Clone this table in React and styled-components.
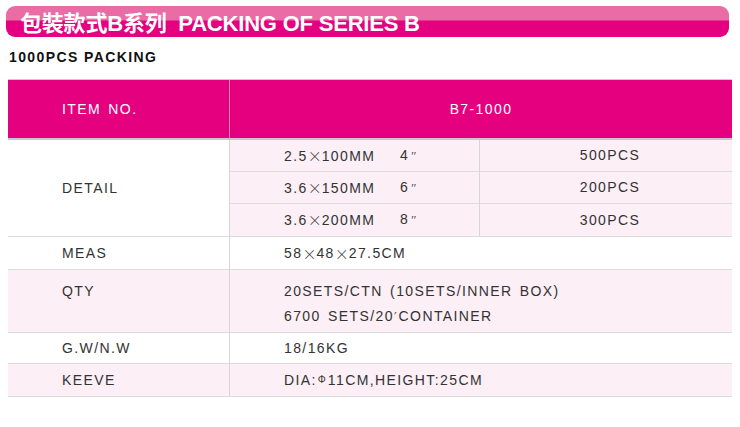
import React from "react";
import styled, { createGlobalStyle } from "styled-components";

const GlobalStyle = createGlobalStyle`
  body {
    margin: 0;
    background: #ffffff;
    font-family: "Liberation Sans", "Noto Sans CJK SC", sans-serif;
  }
`;

const Page = styled.div`
  width: 740px;
  height: 427px;
  padding-top: 6px;
  box-sizing: border-box;
`;

const TitleBar = styled.div`
  margin: 0 11px 0 6px;
  height: 31px;
  box-sizing: border-box;
  border-radius: 9px;
  background: linear-gradient(to bottom, #ea6ca4 0, #ea6ca4 14px, #e4007f 15px, #e4007f 100%);
  display: flex;
  align-items: center;
  padding: 0 0 2px 14px;
  color: #ffffff;
  font-family: "Liberation Sans", "Noto Sans CJK SC", sans-serif;
  font-weight: 700;
  font-size: 22px;
  letter-spacing: -0.2px;
  white-space: pre;
`;

const SubTitle = styled.div`
  margin: 12px 0 0 9px;
  font-family: "Liberation Sans", sans-serif;
  font-weight: 700;
  font-size: 14px;
  letter-spacing: 1.4px;
  color: #111111;
  height: 18px;
`;

const Table = styled.div`
  margin: 12px 8px 0 8px;
  display: grid;
  grid-template-columns: 221px 250px 253px;
  border-top: 1px solid #f3b6d2;
  font-size: 14px;
  letter-spacing: 1.4px;
  word-spacing: 2px;
  color: #333333;
`;

const HeadCell = styled.div`
  height: 58px;
  background: #e4007f;
  color: #ffffff;
  display: flex;
  align-items: center;
  padding-left: ${(p) => (p.$center ? "0" : "54px")};
  justify-content: ${(p) => (p.$center ? "center" : "flex-start")};
  grid-column: ${(p) => p.$span || "auto"};
  border-left: ${(p) => (p.$divider ? "1px solid #f08cbd" : "none")};
  border-bottom: 2px solid #c8c8c8;
`;

const Cell = styled.div`
  height: ${(p) => p.$h}px;
  box-sizing: border-box;
  background: ${(p) => (p.$pink ? "#fdeff6" : "#ffffff")};
  border-bottom: 1px solid #dcdcdc;
  border-left: ${(p) => (p.$divider ? "1px solid #d6d6d6" : "none")};
  grid-column: ${(p) => p.$span || "auto"};
  grid-row: ${(p) => p.$rows || "auto"};
  display: flex;
  flex-direction: column;
  justify-content: ${(p) => (p.$top ? "flex-start" : "center")};
  align-items: ${(p) => (p.$center ? "center" : "flex-start")};
  padding-left: ${(p) => (p.$center ? "8px" : "54px")};
  padding-top: ${(p) => (p.$top ? "9px" : "0")};
  line-height: 25px;
`;

const SizeText = styled.span`
  display: inline-block;
  width: 116px;
`;

const Line = styled.div`
  display: flex;
`;

const Mul = styled.span`
  font-family: "Noto Sans CJK SC", sans-serif;
  font-weight: 300;
  letter-spacing: 0;
`;

const Prime = styled.span`
  font-family: "Liberation Serif", serif;
  font-style: italic;
  font-size: 13px;
  color: #555555;
  margin-left: 1px;
`;

const FootMark = styled.span`
  font-family: "DejaVu Sans", sans-serif;
  font-size: 12px;
  letter-spacing: 0;
  color: #444444;
  margin: 0 2px 0 0;
`;

const Phi = styled.span`
  font-size: 10px;
  letter-spacing: 0;
  margin: 0 2px 0 1px;
  position: relative;
  top: -1px;
`;

const details = [
  ["2.5", "100MM", "4", "500PCS"],
  ["3.6", "150MM", "6", "200PCS"],
  ["3.6", "200MM", "8", "300PCS"],
];

export default function App() {
  return (
    <Page>
      <GlobalStyle />
      <TitleBar>{"包裝款式B系列  PACKING OF SERIES B"}</TitleBar>
      <SubTitle>1000PCS PACKING</SubTitle>
      <Table>
        <HeadCell>ITEM NO.</HeadCell>
        <HeadCell $center $divider $span="2 / 4">B7-1000</HeadCell>

        <Cell $h={97} $rows="2 / 5">DETAIL</Cell>
        {details.map(([a, b, inch, pcs], i) => (
          <React.Fragment key={i}>
            <Cell $h={i === 2 ? 33 : 32} $pink $divider>
              <Line>
                <SizeText>
                  {a}
                  <Mul>×</Mul>
                  {b}
                </SizeText>
                <span>
                  {inch}
                  <Prime>″</Prime>
                </span>
              </Line>
            </Cell>
            <Cell $h={i === 2 ? 33 : 32} $pink $divider $center>
              {pcs}
            </Cell>
          </React.Fragment>
        ))}

        <Cell $h={33}>MEAS</Cell>
        <Cell $h={33} $divider $span="2 / 4">
          <Line>
            58<Mul>×</Mul>48<Mul>×</Mul>27.5CM
          </Line>
        </Cell>

        <Cell $h={63} $pink $top>QTY</Cell>
        <Cell $h={63} $pink $top $divider $span="2 / 4">
          <div>20SETS/CTN (10SETS/INNER BOX)</div>
          <div>
            6700 SETS/20<FootMark>′</FootMark>CONTAINER
          </div>
        </Cell>

        <Cell $h={31}>G.W/N.W</Cell>
        <Cell $h={31} $divider $span="2 / 4">18/16KG</Cell>

        <Cell $h={33} $pink>KEEVE</Cell>
        <Cell $h={33} $pink $divider $span="2 / 4">
          <Line>
            DIA:<Phi>Φ</Phi>11CM,HEIGHT:25CM
          </Line>
        </Cell>
      </Table>
    </Page>
  );
}
